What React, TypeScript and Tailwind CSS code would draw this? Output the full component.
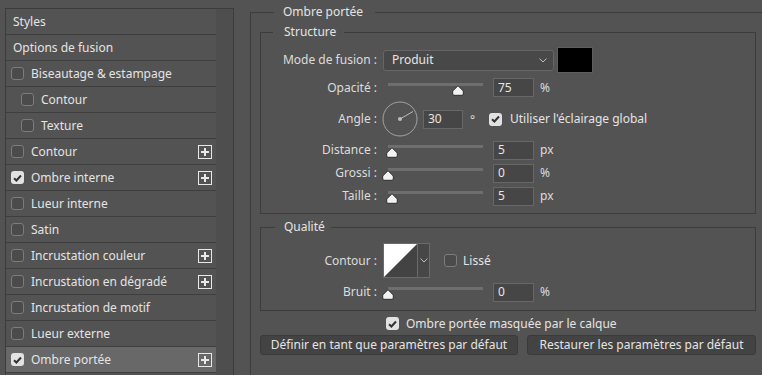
import React from "react";

const Check = ({ checked }: { checked?: boolean }) =>
  checked ? (
    <span className="w-[13px] h-[13px] rounded-[3px] bg-[#e2e2e2] flex items-center justify-center shrink-0">
      <svg width="9" height="8" viewBox="0 0 9 8">
        <path d="M1 4.2 L3.4 6.5 L8 1.5" stroke="#333333" strokeWidth="2" fill="none" />
      </svg>
    </span>
  ) : (
    <span className="block w-[13px] h-[13px] rounded-[3px] border border-[#7c7c7c] bg-[#4b4b4b] shrink-0" />
  );

const Plus = () => (
  <span className="w-[14px] h-[14px] border-[1.5px] border-[#e8e8e8] flex items-center justify-center shrink-0">
    <svg width="10" height="10" viewBox="0 0 10 10">
      <path d="M5 1v8M1 5h8" stroke="#e8e8e8" strokeWidth="2" />
    </svg>
  </span>
);

type Row = { t: string; kind?: "header"; cb?: boolean; sub?: boolean; plus?: boolean; sel?: boolean };

const rows: Row[] = [
  { t: "Styles", kind: "header" },
  { t: "Options de fusion", kind: "header" },
  { t: "Biseautage & estampage" },
  { t: "Contour", sub: true },
  { t: "Texture", sub: true },
  { t: "Contour", plus: true },
  { t: "Ombre interne", cb: true, plus: true },
  { t: "Lueur interne" },
  { t: "Satin" },
  { t: "Incrustation couleur", plus: true },
  { t: "Incrustation en dégradé", plus: true },
  { t: "Incrustation de motif" },
  { t: "Lueur externe" },
  { t: "Ombre portée", cb: true, plus: true, sel: true },
];

const Thumb = ({ left }: { left: number }) => (
  <svg className="absolute top-[6px]" style={{ left: left - 6 }} width="12" height="11" viewBox="0 0 12 11">
    <path d="M6 0.7 L11.3 6 V9 Q11.3 10.3 10 10.3 H2 Q0.7 10.3 0.7 9 V6 Z" fill="#f2f2f2" stroke="#2e2e2e" strokeWidth="1" />
  </svg>
);

const Slider = ({ pos }: { pos: number }) => (
  <div className="relative w-[105px] h-[18px] ml-[6px] shrink-0">
    <div className="absolute left-[5px] right-[5px] top-[4px] h-[3px] bg-[#6e6e6e]" />
    <Thumb left={5 + pos} />
  </div>
);

const Input = ({ v, w = "w-[41px]" }: { v: string; w?: string }) => (
  <div className={`${w} h-[19px] bg-[#464646] border border-[#676767] flex items-center pl-[4px] text-[#e6e6e6] shrink-0`}>
    {v}
  </div>
);

const Label = ({ t }: { t: string }) => (
  <div className="w-[116px] text-right shrink-0 text-[#dcdcdc]">{t}</div>
);

const SliderRow = ({ label, pos, v, unit, cls }: { label: string; pos: number; v: string; unit: string; cls: string }) => (
  <div className={`flex items-center h-[18px] ${cls}`}>
    <Label t={label} />
    <Slider pos={pos} />
    <div className="ml-[5px]">
      <Input v={v} />
    </div>
    <span className="ml-[6px] text-[#dcdcdc]">{unit}</span>
  </div>
);

const Chevron = () => (
  <svg width="8" height="5" viewBox="0 0 8 5">
    <path d="M0.5 0.5 L4 4 L7.5 0.5" stroke="#bdbdbd" strokeWidth="1" fill="none" />
  </svg>
);

export default function App() {
  return (
    <div className="w-[762px] h-[375px] overflow-hidden bg-[#535353] flex items-start font-['Noto_Sans',sans-serif] text-[12px] leading-[16px] text-[#e4e4e4]">
      {/* Left styles panel */}
      <div className="ml-[5px] mt-[8px] h-[400px] flex border-l border-t border-r border-[#3c3c3c] shrink-0">
        <div className="w-[210px]">
          {rows.map((r, i) => (
            <div
              key={i}
              className={`h-[26px] border-b border-[#3e3e3e] flex items-center ${r.sel ? "bg-[#686868]" : ""}`}
            >
              {r.kind === "header" ? (
                <span className="pl-[7px]">{r.t}</span>
              ) : (
                <>
                  <span className={r.sub ? "ml-[15px]" : "ml-[5px]"}>
                    <Check checked={r.cb} />
                  </span>
                  <span className="ml-[7px] flex-1">{r.t}</span>
                  {r.plus && (
                    <span className="mr-[4px]">
                      <Plus />
                    </span>
                  )}
                </>
              )}
            </div>
          ))}
        </div>
        <div className="w-[17px] bg-[#4e4e4e]" />
      </div>

      {/* Right: Ombre portée */}
      <fieldset className="ml-[16px] mt-[4px] w-[540px] h-[400px] border-l border-t border-[#3c3c3c] pl-[9px] shrink-0">
        <legend className="ml-[14px] pl-[9px] pr-[12px] leading-[16px] text-[#e4e4e4]">Ombre portée</legend>

        {/* Structure */}
        <fieldset className="mt-[4px] w-[496px] border border-[#3c3c3c] pb-[8px]">
          <legend className="ml-[12px] pl-[11px] pr-[8px] leading-[16px]">Structure</legend>

          <div className="flex items-center h-[26px] mt-[7px]">
            <Label t="Mode de fusion :" />
            <div className="ml-[6px] w-[171px] h-[21px] bg-[#484848] border border-[#666666] rounded-[3px] flex items-center justify-between pl-[8px] pr-[6px]">
              <span className="text-[#e6e6e6]">Produit</span>
              <Chevron />
            </div>
            <div className="ml-[3px] w-[36px] h-[26px] bg-black border border-[#5e5e5e]" />
          </div>

          <div className="flex items-center h-[19px] mt-[5px]">
            <Label t="Opacité :" />
            <Slider pos={70} />
            <div className="ml-[5px]">
              <Input v="75" />
            </div>
            <span className="ml-[6px] text-[#dcdcdc]">%</span>
          </div>

          <div className="flex items-center h-[36px] mt-[4px]">
            <Label t="Angle :" />
            <svg className="ml-[5px] shrink-0" width="36" height="36" viewBox="0 0 36 36">
              <circle cx="18" cy="18" r="17" stroke="#a3a3a3" strokeWidth="1" fill="none" />
              <line x1="18" y1="18" x2="31" y2="10.5" stroke="#bdbdbd" strokeWidth="1" />
              <circle cx="18" cy="18" r="2" fill="#bdbdbd" />
            </svg>
            <div className="ml-[5px]">
              <Input v="30" w="w-[40px]" />
            </div>
            <span className="w-[26px] pl-[7px] text-[#dcdcdc] mt-[2px]">°</span>
            <Check checked />
            <span className="ml-[8px]">Utiliser l'éclairage global</span>
          </div>

          <SliderRow label="Distance :" pos={4} v="5" unit="px" cls="mt-[4px]" />
          <SliderRow label="Grossi :" pos={0} v="0" unit="%" cls="mt-[5px]" />
          <SliderRow label="Taille :" pos={4} v="5" unit="px" cls="mt-[5px]" />
        </fieldset>

        {/* Qualité */}
        <fieldset className="mt-[5px] w-[496px] border border-[#3c3c3c] pb-[9px]">
          <legend className="ml-[14px] pl-[9px] pr-[6px] leading-[16px]">Qualité</legend>

          <div className="flex items-center h-[35px] mt-[8px]">
            <Label t="Contour :" />
            <div className="ml-[6px] flex h-[35px] border border-[#6a6a6a] shrink-0">
              <svg width="33" height="33" viewBox="0 0 33 33" className="block">
                <rect x="0" y="0" width="33" height="33" fill="#434343" />
                <polygon points="0,0 33,0 0,33" fill="#ffffff" />
              </svg>
              <div className="w-[12px] bg-[#474747] border-l border-[#6a6a6a] flex items-center justify-center">
                <Chevron />
              </div>
            </div>
            <span className="ml-[14px]">
              <Check />
            </span>
            <span className="ml-[6px]">Lissé</span>
          </div>

          <SliderRow label="Bruit :" pos={0} v="0" unit="%" cls="mt-[5px]" />
        </fieldset>

        <div className="flex items-center h-[13px] mt-[6px] pl-[126px]">
          <Check checked />
          <span className="ml-[7px]">Ombre portée masquée par le calque</span>
        </div>

        <div className="flex gap-[9px] mt-[5px]">
          <div className="w-[258px] h-[20px] bg-[#434343] border border-[#3a3a3a] rounded-[3px] flex items-center justify-center">
            Définir en tant que paramètres par défaut
          </div>
          <div className="w-[229px] h-[20px] bg-[#434343] border border-[#3a3a3a] rounded-[3px] flex items-center justify-center">
            Restaurer les paramètres par défaut
          </div>
        </div>
      </fieldset>
    </div>
  );
}
